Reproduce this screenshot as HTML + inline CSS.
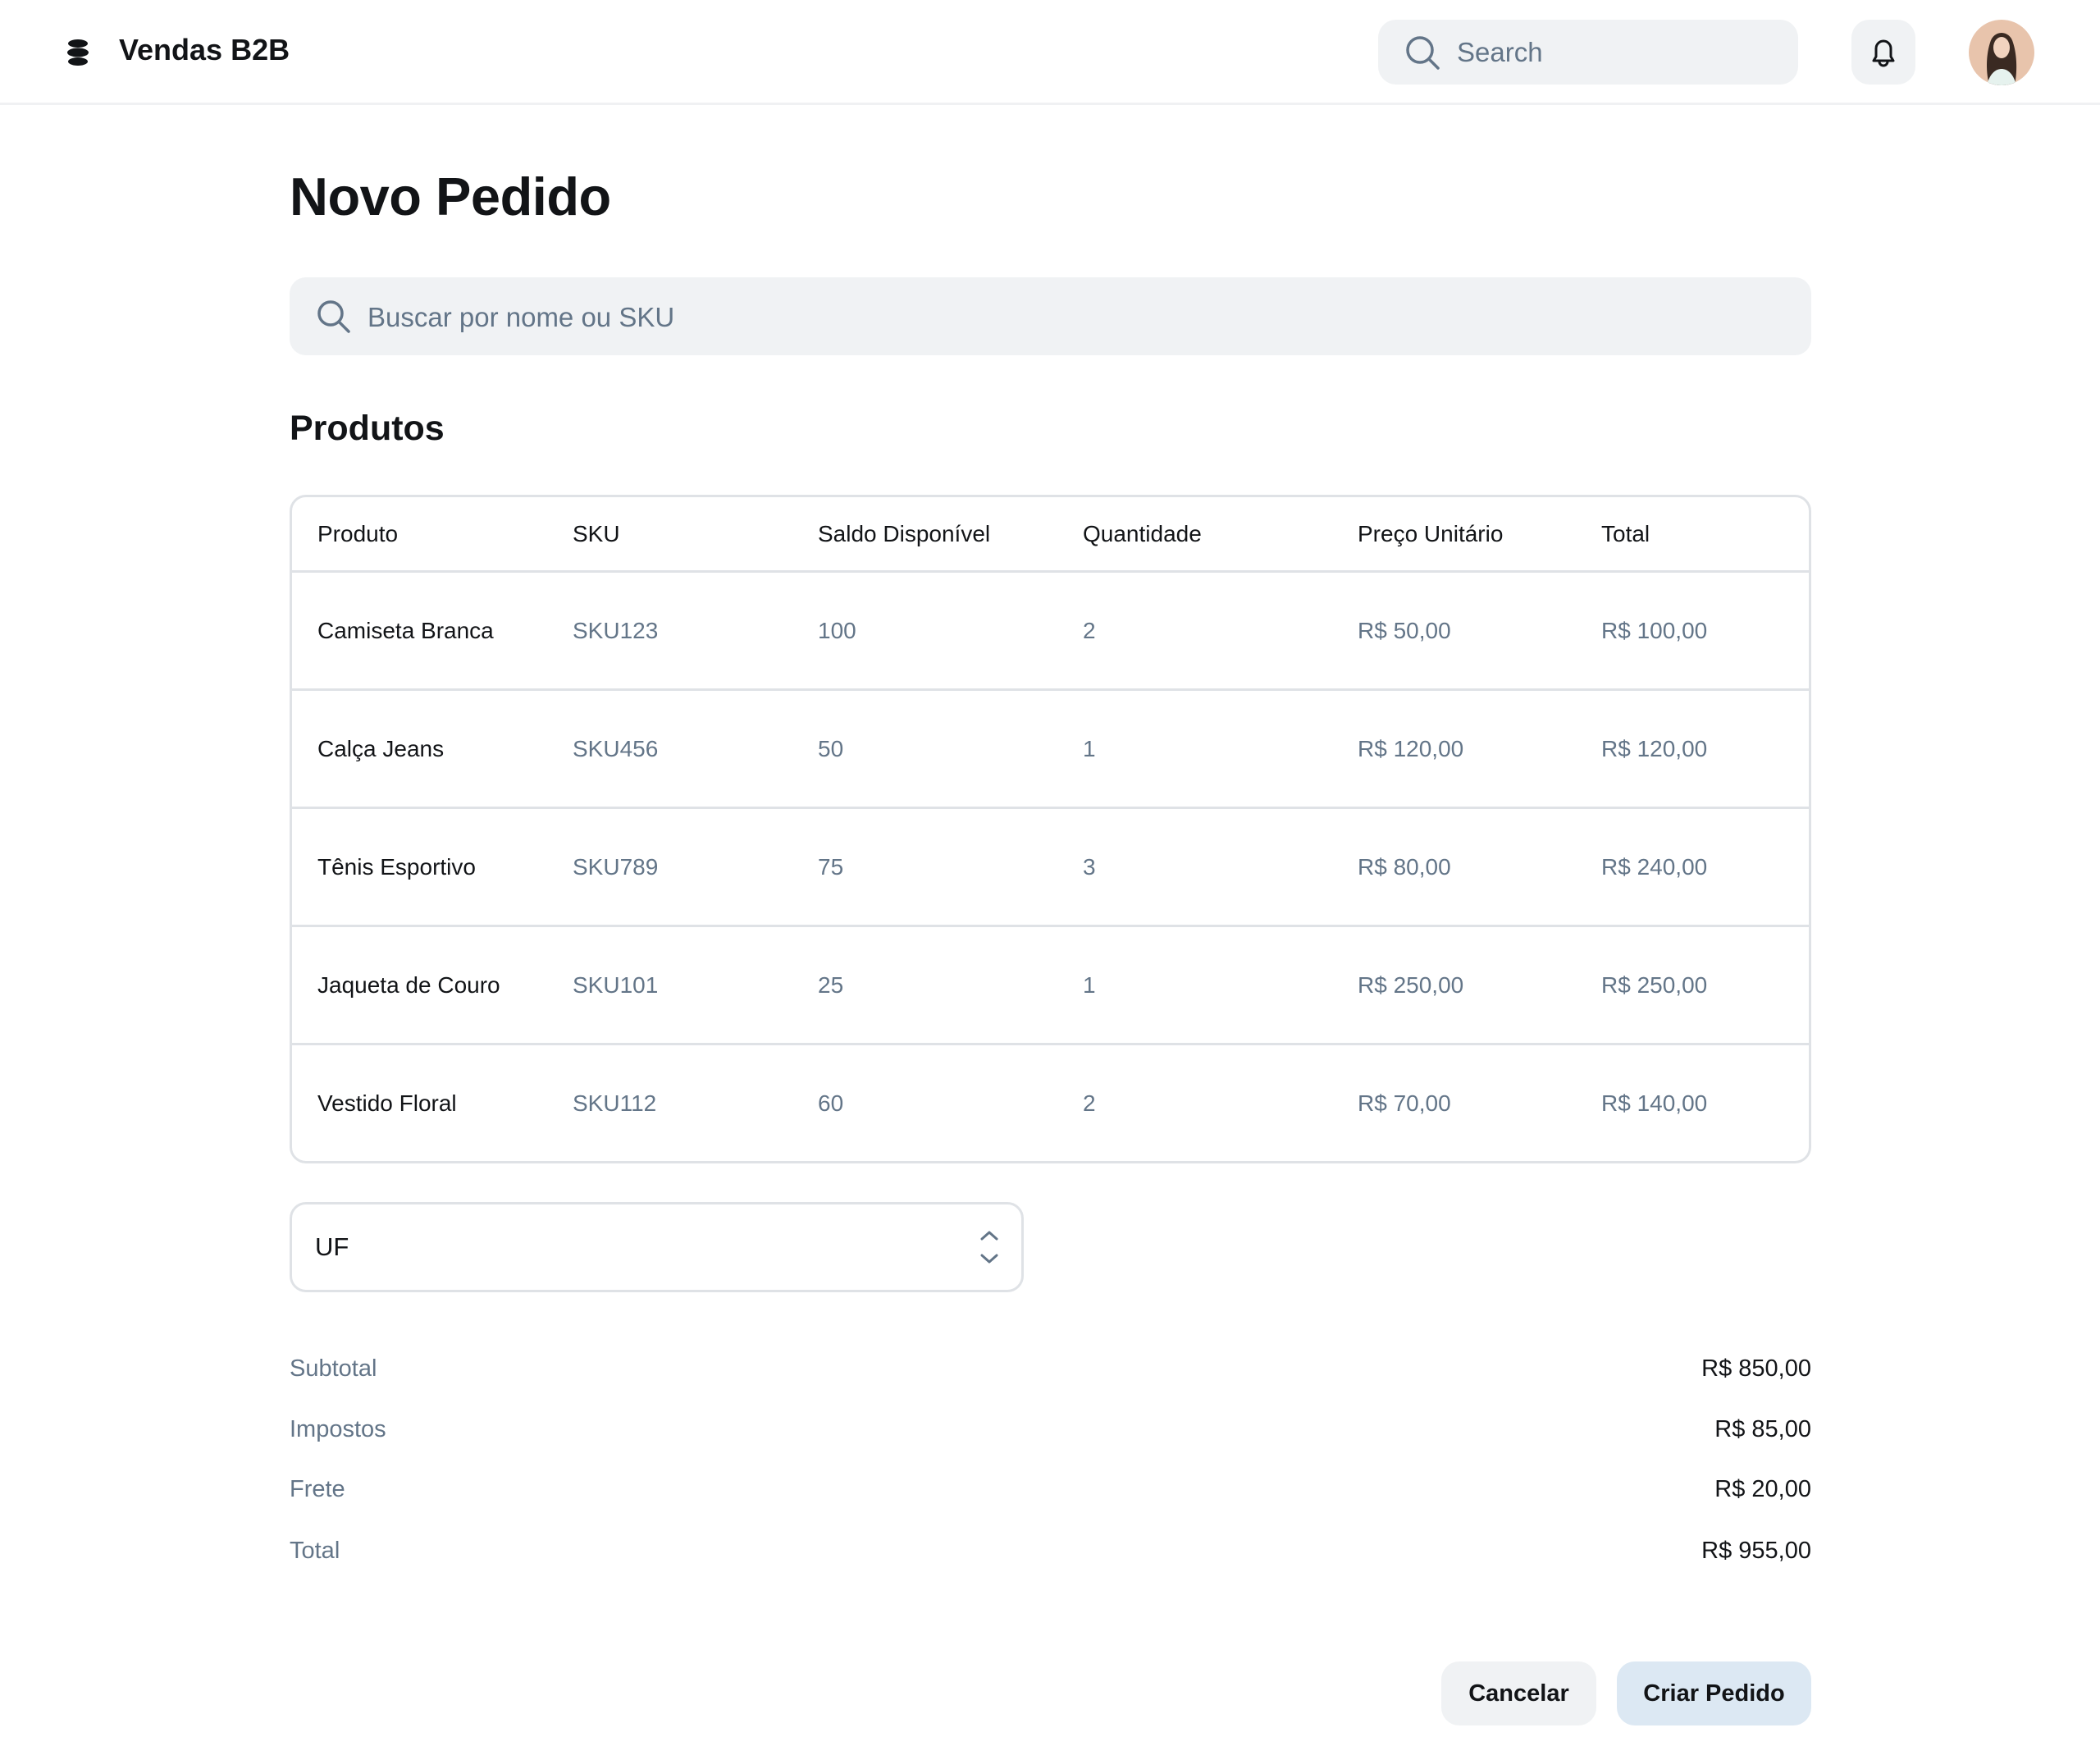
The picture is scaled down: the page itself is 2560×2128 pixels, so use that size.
<!DOCTYPE html>
<html><head><meta charset="utf-8"><style>
*{box-sizing:border-box;margin:0;padding:0}
body{width:2560px;height:2128px;background:#fff;font-family:"Liberation Sans",sans-serif;color:#121417;position:relative;overflow:hidden}
.abs{position:absolute}
.hdr{left:0;top:0;width:2560px;height:128px;border-bottom:3px solid #f0f1f3}
.search{left:1680px;top:24px;width:512px;height:79px;background:#f0f2f4;border-radius:22px}
.bell{left:2257px;top:24px;width:78px;height:79px;background:#f0f2f4;border-radius:22px}
.avatar{left:2400px;top:24px;width:80px;height:80px;border-radius:50%;background:#e8c4ac;overflow:hidden}
.bigsearch{left:353px;top:338px;width:1855px;height:95px;background:#f0f2f4;border-radius:20px}
table{position:absolute;left:353px;top:603px;width:1855px;border:3px solid #dfe2e6;border-radius:20px;border-collapse:separate;border-spacing:0;font-size:28px}
td,th{text-align:left;font-weight:normal;padding:0}
th{height:89px;color:#121417}
td{height:144px;border-top:3px solid #dfe2e6;color:#637588}
td:first-child{color:#121417}
td:first-child,th:first-child{padding-left:31px}
.sel{left:353px;top:1465px;width:895px;height:110px;border:3px solid #dfe2e6;border-radius:20px}
.lbl{left:353px;font-size:29px;color:#637588}
.val{right:352px;font-size:29px;color:#121417;text-align:right}
.btn{top:2025px;height:78px;border-radius:22px;font-size:29px;font-weight:bold;text-align:center;line-height:78px}
</style></head><body>
<div class="abs hdr"></div>
<svg class="abs" style="left:80px;top:48px" width="30" height="32" viewBox="0 0 30 32"><ellipse cx="15" cy="5" rx="12" ry="5" fill="#121417"/><ellipse cx="15" cy="16" rx="13" ry="5.5" fill="#121417"/><ellipse cx="15" cy="27" rx="12" ry="5" fill="#121417"/></svg>
<div class="abs" style="left:145px;top:40px;font-size:36px;font-weight:bold">Vendas B2B</div>
<div class="abs search"></div>
<svg class="abs" style="left:1712px;top:42px" width="46" height="46" viewBox="0 0 46 46"><circle cx="19" cy="19" r="15" fill="none" stroke="#637588" stroke-width="3.5"/><line x1="30" y1="30" x2="41" y2="41" stroke="#637588" stroke-width="3.5" stroke-linecap="round"/></svg>
<div class="abs" style="left:1776px;top:45px;font-size:33px;color:#637588">Search</div>
<div class="abs bell"></div>
<svg class="abs" style="left:2278px;top:44px" width="36" height="40" viewBox="0 0 36 40"><path d="M6 30 L9 25 V15 A9 9 0 0 1 27 15 V25 L30 30 Z" fill="none" stroke="#121417" stroke-width="3" stroke-linejoin="round"/><path d="M13 31 A5 5 0 0 0 23 31" fill="none" stroke="#121417" stroke-width="3"/></svg>
<div class="abs avatar"><svg width="80" height="80" viewBox="0 0 80 80"><path d="M25 80 C20 60 22 40 26 28 C30 12 50 12 54 28 C58 40 60 60 56 80Z" fill="#3a2a22"/><ellipse cx="40" cy="34" rx="10" ry="13" fill="#f1d3bf"/><path d="M22 80 C26 64 34 60 40 60 C46 60 54 64 58 80Z" fill="#e6f2ee"/></svg></div>
<div class="abs" style="left:353px;top:202px;font-size:65px;font-weight:bold;letter-spacing:-0.5px">Novo Pedido</div>
<div class="abs bigsearch"></div>
<svg class="abs" style="left:385px;top:364px" width="44" height="44" viewBox="0 0 44 44"><circle cx="18" cy="18" r="14" fill="none" stroke="#637588" stroke-width="3.5"/><line x1="28.5" y1="28.5" x2="40" y2="40" stroke="#637588" stroke-width="3.5" stroke-linecap="round"/></svg>
<div class="abs" style="left:448px;top:368px;font-size:33px;color:#637588">Buscar por nome ou SKU</div>
<div class="abs" style="left:353px;top:498px;font-size:43px;font-weight:bold">Produtos</div>
<table>
<tr><th style="width:342px">Produto</th><th style="width:299px">SKU</th><th style="width:323px">Saldo Disponível</th><th style="width:335px">Quantidade</th><th style="width:297px">Preço Unitário</th><th>Total</th></tr>
<tr><td>Camiseta Branca</td><td>SKU123</td><td>100</td><td>2</td><td>R$ 50,00</td><td>R$ 100,00</td></tr>
<tr><td>Calça Jeans</td><td>SKU456</td><td>50</td><td>1</td><td>R$ 120,00</td><td>R$ 120,00</td></tr>
<tr><td>Tênis Esportivo</td><td>SKU789</td><td>75</td><td>3</td><td>R$ 80,00</td><td>R$ 240,00</td></tr>
<tr><td>Jaqueta de Couro</td><td>SKU101</td><td>25</td><td>1</td><td>R$ 250,00</td><td>R$ 250,00</td></tr>
<tr><td>Vestido Floral</td><td>SKU112</td><td>60</td><td>2</td><td>R$ 70,00</td><td>R$ 140,00</td></tr>
</table>
<div class="abs sel"></div>
<div class="abs" style="left:384px;top:1502px;font-size:31px">UF</div>
<svg class="abs" style="left:1192px;top:1497px" width="28" height="46" viewBox="0 0 28 46"><path d="M5 13 L14 5 L23 13 M5 33 L14 41 L23 33" fill="none" stroke="#637588" stroke-width="3" stroke-linecap="round" stroke-linejoin="round"/></svg>
<div class="abs lbl" style="top:1652px">Subtotal</div><div class="abs val" style="top:1652px">R$ 850,00</div>
<div class="abs lbl" style="top:1726px">Impostos</div><div class="abs val" style="top:1726px">R$ 85,00</div>
<div class="abs lbl" style="top:1799px">Frete</div><div class="abs val" style="top:1799px">R$ 20,00</div>
<div class="abs lbl" style="top:1874px">Total</div><div class="abs val" style="top:1874px">R$ 955,00</div>
<div class="abs btn" style="left:1757px;width:189px;background:#f0f2f4">Cancelar</div>
<div class="abs btn" style="left:1971px;width:237px;background:#dce8f3">Criar Pedido</div>
</body></html>
